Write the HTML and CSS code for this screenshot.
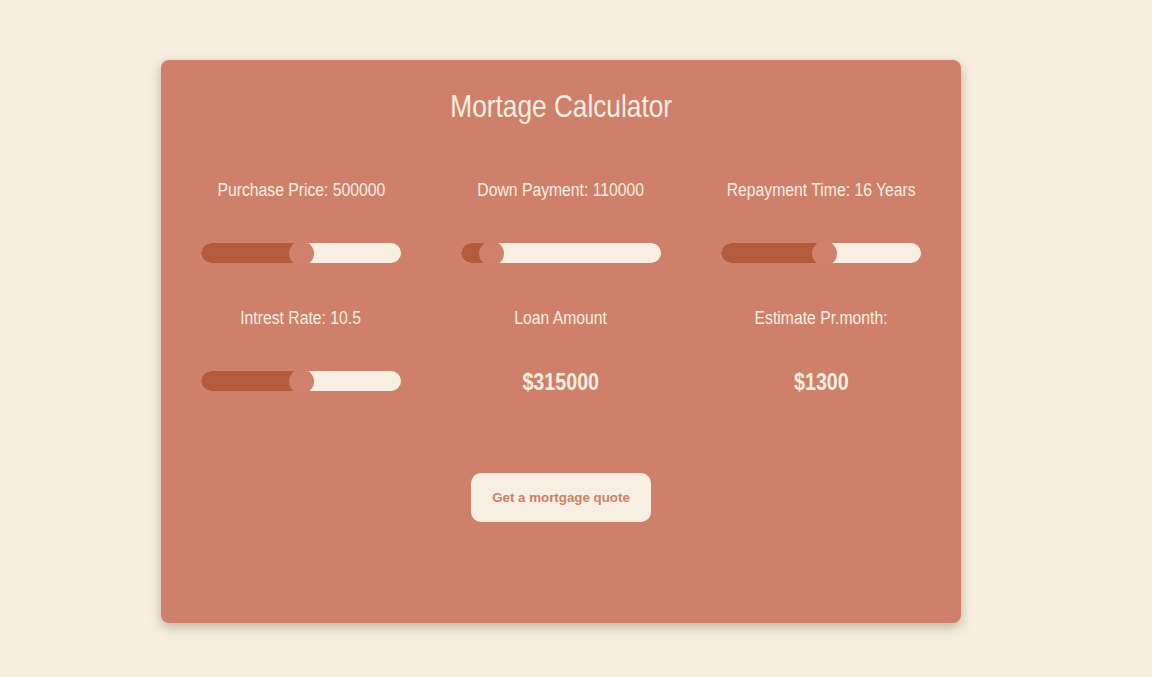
FILE: index.html
```html
<!DOCTYPE html>
<html lang="en">
<head>
<meta charset="utf-8">
<title>Mortage Calculator</title>
<link rel="stylesheet" href="styles.css">
</head>
<body>
  <main class="card">
    <h1 class="title"><span class="narrow">Mortage Calculator</span></h1>
    <div class="grid">
      <div class="cell">
        <p class="label"><span class="narrow">Purchase Price: 500000</span></p>
        <div class="slider"><div class="fill" style="width:100px"></div><div class="thumb" style="left:87.5px"></div></div>
      </div>
      <div class="cell">
        <p class="label"><span class="narrow">Down Payment: 110000</span></p>
        <div class="slider"><div class="fill" style="width:30px"></div><div class="thumb" style="left:17.5px"></div></div>
      </div>
      <div class="cell">
        <p class="label"><span class="narrow">Repayment Time: 16 Years</span></p>
        <div class="slider"><div class="fill" style="width:103px"></div><div class="thumb" style="left:90.5px"></div></div>
      </div>
      <div class="cell">
        <p class="label"><span class="narrow">Intrest Rate: 10.5</span></p>
        <div class="slider"><div class="fill" style="width:100px"></div><div class="thumb" style="left:87.5px"></div></div>
      </div>
      <div class="cell">
        <p class="label"><span class="narrow">Loan Amount</span></p>
        <p class="value"><span class="narrow">$315000</span></p>
      </div>
      <div class="cell">
        <p class="label"><span class="narrow">Estimate Pr.month:</span></p>
        <p class="value"><span class="narrow">$1300</span></p>
      </div>
    </div>
    <div class="actions">
      <button class="btn" type="button">Get a mortgage quote</button>
    </div>
  </main>
</body>
</html>
```
FILE: styles.css
```css
html, body {
  margin: 0;
  padding: 0;
}
body {
  background: #f6efe0;
  min-height: 677px;
  padding: 60px 0 0 161px;
  box-sizing: border-box;
  font-family: "Liberation Sans", Arial, sans-serif;
  color: #f7efe1;
}
.card {
  width: 800px;
  height: 563px;
  box-sizing: border-box;
  background: #cf806a;
  border-radius: 8px;
  box-shadow: 0 4px 12px rgba(90, 70, 40, 0.35);
  padding: 28px 40px 0;
  display: flex;
  flex-direction: column;
  align-items: center;
}
.narrow {
  display: inline-block;
  white-space: nowrap;
  transform: scaleX(0.82);
  transform-origin: center;
}
.title {
  margin: 0;
  font-size: 32px;
  font-weight: 400;
  line-height: 37px;
  color: #f7efe1;
  white-space: nowrap;
}
.grid {
  margin-top: 54px;
  display: grid;
  grid-template-columns: repeat(3, 200px);
  column-gap: 60px;
  row-gap: 44px;
}
.cell {
  display: flex;
  flex-direction: column;
  align-items: center;
}
.label {
  margin: 0;
  font-size: 19.2px;
  line-height: 22px;
  height: 22px;
  white-space: nowrap;
  text-align: center;
}
.slider {
  margin-top: 42px;
  position: relative;
  width: 200px;
  height: 20px;
  border-radius: 10px;
  background: #f7efe1;
  overflow: hidden;
}
.fill {
  height: 100%;
  background: #b35b3a;
}
.thumb {
  position: absolute;
  top: -2.5px;
  width: 25px;
  height: 25px;
  border-radius: 50%;
  background: #d0806b;
}
.value {
  margin: 39px 0 0;
  font-size: 24px;
  font-weight: 700;
  line-height: 28px;
  white-space: nowrap;
}
.actions {
  margin-top: 77px;
}
.btn {
  width: 180px;
  height: 49px;
  border: none;
  border-radius: 10px;
  background: #f7efe1;
  color: #cf7f68;
  font-family: "Liberation Sans", Arial, sans-serif;
  font-size: 13.33px;
  font-weight: 700;
  cursor: pointer;
}
```
